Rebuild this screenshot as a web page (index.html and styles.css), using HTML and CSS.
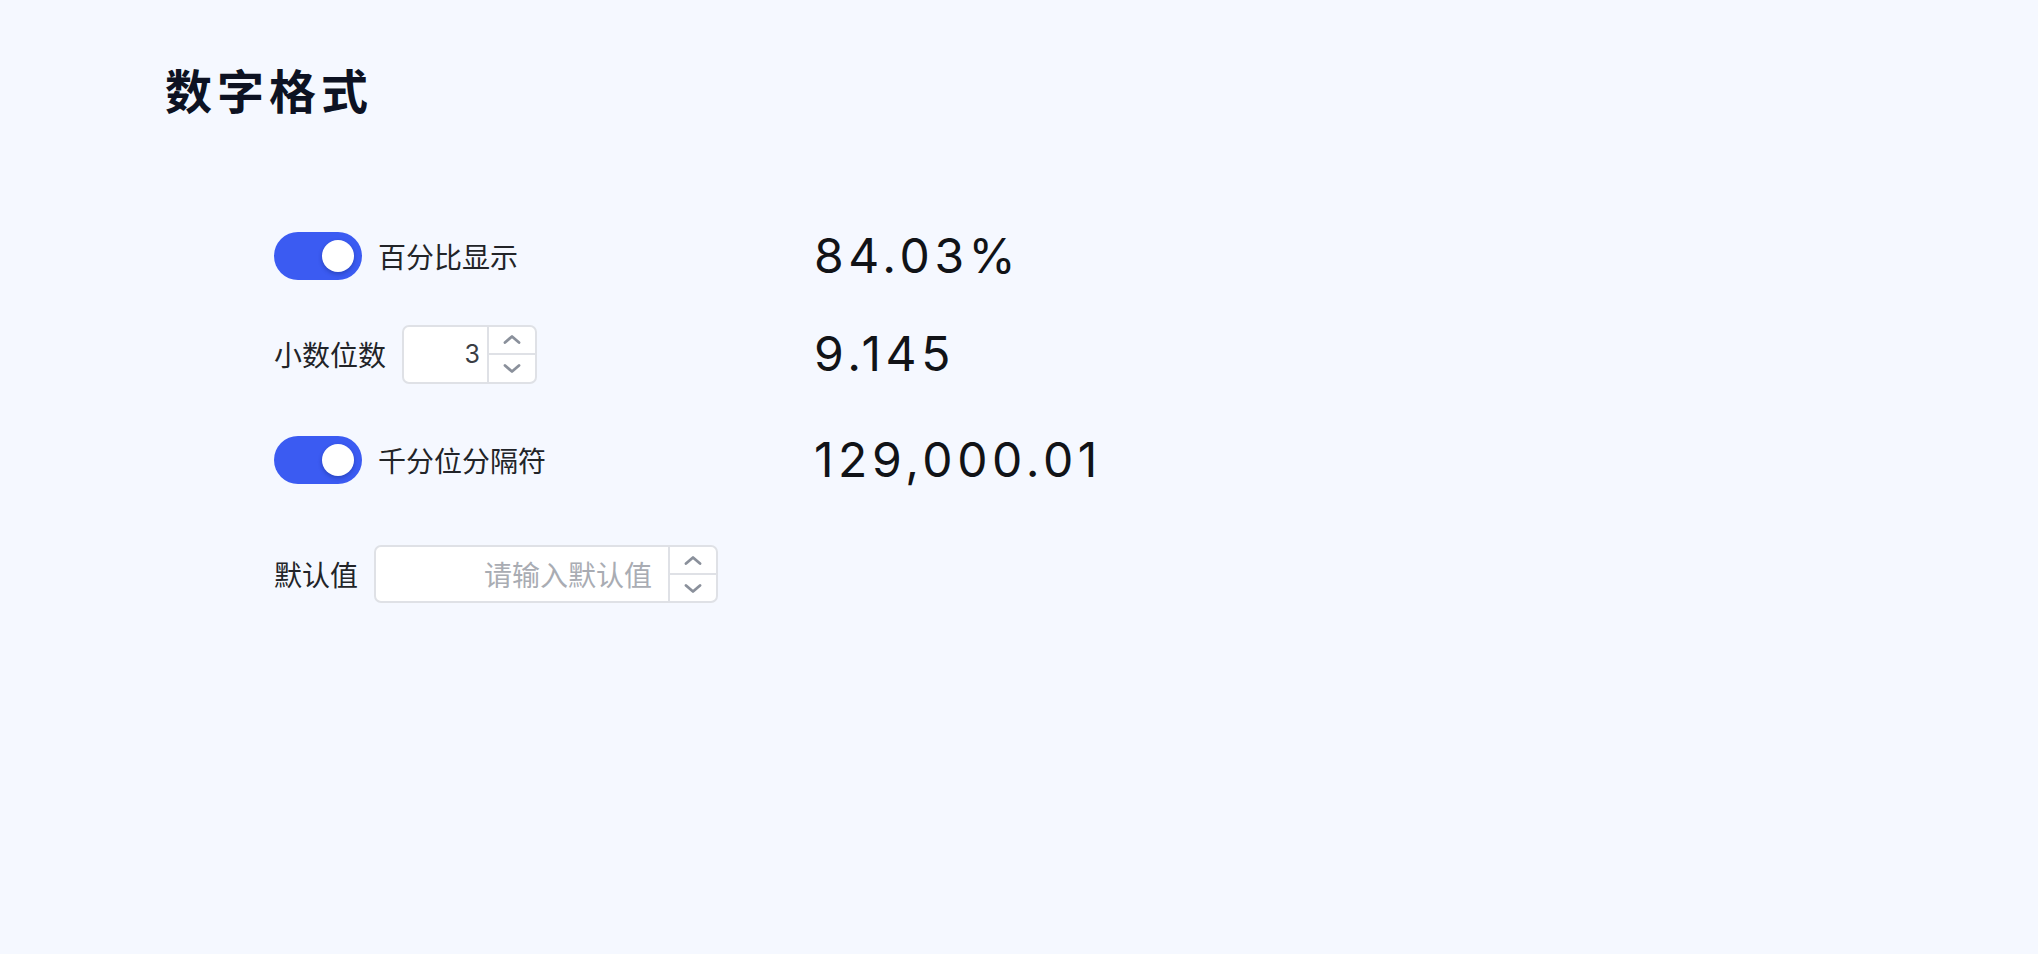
FILE: index.html
```html
<!DOCTYPE html>
<html lang="zh-CN">
<head>
<meta charset="utf-8">
<title>数字格式</title>
<link rel="stylesheet" href="styles.css">
</head>
<body>
<div class="page">
  <h1 class="title">数字格式</h1>
  <div class="form">
    <div class="row row-1">
      <div class="cell">
        <span class="switch"><span class="knob"></span></span>
        <span class="label">百分比显示</span>
      </div>
      <div class="value">84.03%</div>
    </div>
    <div class="row row-2">
      <div class="cell">
        <span class="label">小数位数</span>
        <div class="num-input small">
          <div class="num-field"><span class="num-text">3</span></div>
          <div class="stepper">
            <span class="step"><svg viewBox="0 0 18 9" class="chev"><path d="M2 7.5 L9 1.5 L16 7.5"/></svg></span>
            <span class="step"><svg viewBox="0 0 18 9" class="chev"><path d="M2 1.5 L9 7.5 L16 1.5"/></svg></span>
          </div>
        </div>
      </div>
      <div class="value">9.145</div>
    </div>
    <div class="row row-3">
      <div class="cell">
        <span class="switch"><span class="knob"></span></span>
        <span class="label">千分位分隔符</span>
      </div>
      <div class="value">129,000.01</div>
    </div>
    <div class="row row-4">
      <div class="cell">
        <span class="label">默认值</span>
        <div class="num-input wide">
          <div class="num-field"><span class="placeholder">请输入默认值</span></div>
          <div class="stepper">
            <span class="step"><svg viewBox="0 0 18 9" class="chev"><path d="M2 7.5 L9 1.5 L16 7.5"/></svg></span>
            <span class="step"><svg viewBox="0 0 18 9" class="chev"><path d="M2 1.5 L9 7.5 L16 1.5"/></svg></span>
          </div>
        </div>
      </div>
    </div>
  </div>
</div>
</body>
</html>
```
FILE: styles.css
```css
html, body {
  margin: 0;
  padding: 0;
  background: #f5f8ff;
}
body {
  width: 2038px;
  height: 954px;
  overflow: hidden;
  font-family: "Inter", "Noto Sans CJK SC", sans-serif;
  color: #1f2329;
}
.page {
  padding: 60px 0 0 165px;
}
.title {
  margin: 0;
  font-family: "Noto Sans CJK SC", sans-serif;
  font-size: 47px;
  line-height: 58px;
  font-weight: 700;
  letter-spacing: 5px;
  color: #0d1222;
}
.form {
  margin-top: 103px;
  margin-left: 109px;
  display: flex;
  flex-direction: column;
}
.row {
  display: flex;
  align-items: center;
  height: 70px;
}
.row-2 { margin-top: 28px; }
.row-3 { margin-top: 36px; }
.row-4 { margin-top: 44px; }
.cell {
  width: 540px;
  display: flex;
  align-items: center;
  gap: 16px;
}
.label {
  font-family: "Noto Sans CJK SC", sans-serif;
  font-size: 28px;
  line-height: 40px;
  color: #222428;
}
.switch {
  width: 88px;
  height: 48px;
  border-radius: 24px;
  background: #3b5bf2;
  display: flex;
  align-items: center;
  justify-content: flex-end;
  padding: 0 8px;
  box-sizing: border-box;
}
.knob {
  width: 32px;
  height: 32px;
  border-radius: 50%;
  background: #ffffff;
  box-shadow: 0 2px 4px rgba(0, 20, 80, 0.3);
}
.num-input {
  display: flex;
  height: 59px;
  box-sizing: border-box;
  border: 2px solid #dfe1e6;
  border-radius: 7px;
  background: #ffffff;
  overflow: hidden;
}
.num-input.small { width: 135px; }
.num-input.wide { width: 344px; height: 58px; }
.num-field {
  flex: 1;
  display: flex;
  align-items: center;
  justify-content: flex-end;
  padding-right: 7px;
}
.num-input.wide .num-field { padding-right: 16px; }
.num-text {
  font-family: "Inter", sans-serif;
  font-size: 25px;
  color: #3a3d44;
}
.placeholder {
  font-family: "Noto Sans CJK SC", sans-serif;
  font-size: 28px;
  color: #a9acb3;
}
.stepper {
  width: 46px;
  border-left: 2px solid #dfe1e6;
  display: flex;
  flex-direction: column;
}
.step {
  flex: 1;
  display: flex;
  align-items: center;
  justify-content: center;
}
.step + .step {
  border-top: 2px solid #dfe1e6;
}
.chev {
  width: 18px;
  height: 9px;
  fill: none;
  stroke: #8a909b;
  stroke-width: 2.8;
  stroke-linecap: round;
  stroke-linejoin: round;
}
.value {
  font-family: "Inter", sans-serif;
  font-size: 48px;
  line-height: 70px;
  letter-spacing: 4.6px;
  color: #111317;
}
```
